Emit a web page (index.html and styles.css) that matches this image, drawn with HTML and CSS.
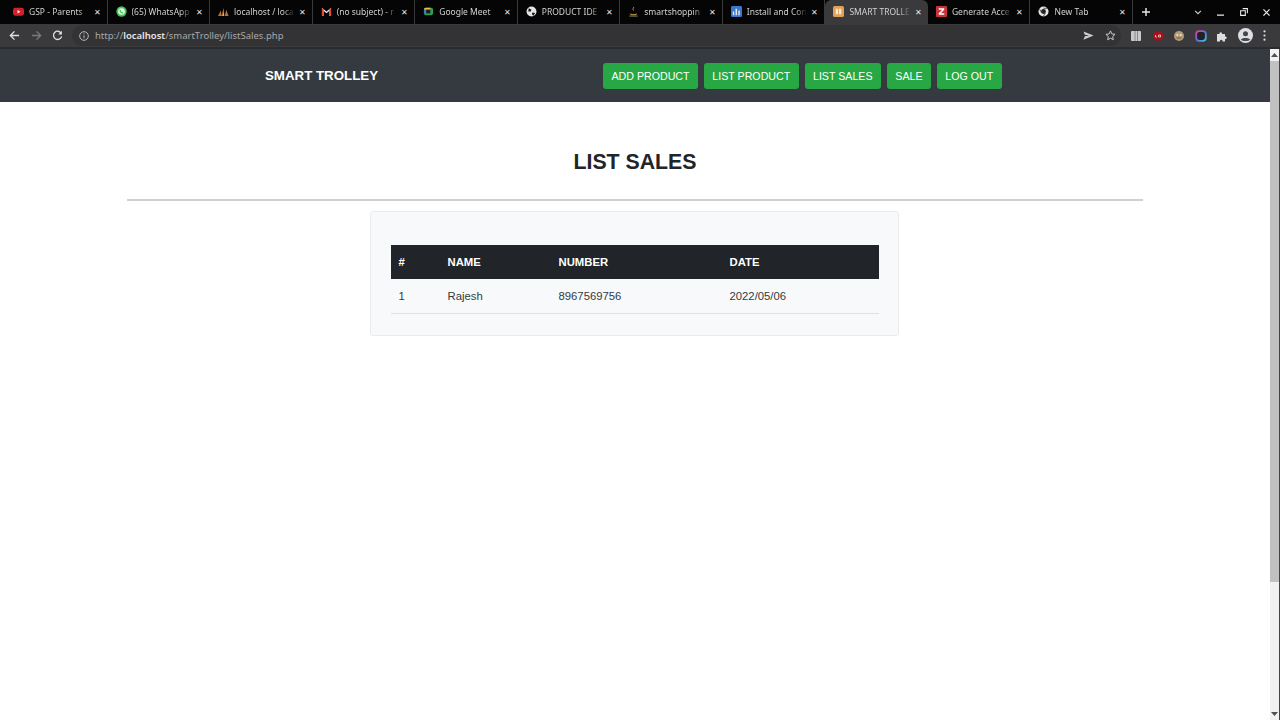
FILE: index.html
```html
<!DOCTYPE html>
<html lang="en">
<head>
  <meta charset="UTF-8">
  <meta name="viewport" content="width=device-width, initial-scale=1.0">
  <title>List Sales</title>
  <link rel="stylesheet" href="styles.css">
</head>
<body>

  <!-- browser chrome -->
  <div class="tab-strip">
    <div class="tab">
      <svg class="fav" viewBox="0 0 12 12"><rect y="2" width="12" height="8.5" rx="2.5" fill="#d5202a"/><path d="M5 4.300v4l3-2z" fill="#fff"/></svg>
      <span class="tab-title">GSP - Parents</span><span class="tab-x">&#10005;</span>
    </div>
    <div class="tab">
      <svg class="fav" viewBox="0 0 12 12"><circle cx="6" cy="6" r="5.600" fill="#3fc552"/><circle cx="6" cy="6" r="3.600" fill="#e8f8ea"/><path d="M4.400 4.200c0 2 1.500 3.400 3.300 3.600" stroke="#3fc552" stroke-width="1.300" fill="none"/></svg>
      <span class="tab-title">(65) WhatsApp</span><span class="tab-x">&#10005;</span>
    </div>
    <div class="tab">
      <svg class="fav" viewBox="0 0 12 12"><path d="M0 11 3 5l1 6zM4 11l2-9 1 9zM7.500 11 9 4l2.500 7z" fill="#b9733a"/><path d="M5 11 6 6l.5 5z" fill="#e2c14a"/></svg>
      <span class="tab-title">localhost / loca</span><span class="tab-x">&#10005;</span>
    </div>
    <div class="tab">
      <svg class="fav" viewBox="0 0 12 12"><path d="M1 10.500V2l5 4 5-4v8.500H9V5.500L6 8 3 5.500v5z" fill="#e6e6e6"/><path d="M1 10.500V2l2 1.600v6.900z" fill="#d8473b"/><path d="M11 10.500V2L9 3.600v6.900z" fill="#d8473b"/></svg>
      <span class="tab-title">(no subject) - r</span><span class="tab-x">&#10005;</span>
    </div>
    <div class="tab">
      <svg class="fav" viewBox="0 0 12 12"><rect x="1" y="2" width="10" height="8" rx="2" fill="#2f9e56"/><path d="M1 4a2 2 0 0 1 2-2h5v2z" fill="#f2bd2c"/><path d="M1 4h2.500v4H1z" fill="#3a78e0"/><rect x="3.500" y="4" width="4.500" height="4" fill="#1c1c1c"/></svg>
      <span class="tab-title">Google Meet</span><span class="tab-x">&#10005;</span>
    </div>
    <div class="tab">
      <svg class="fav" viewBox="0 0 12 12"><circle cx="6" cy="6" r="5.400" fill="#e4e4e4"/><path d="M3 2.500 6 4 5 6 2.500 6zM7 7l3 .5L8 10.500 6.500 9z" fill="#111"/></svg>
      <span class="tab-title">PRODUCT IDE</span><span class="tab-x">&#10005;</span>
    </div>
    <div class="tab">
      <svg class="fav" viewBox="0 0 12 12"><path d="M6.500 1c-1 1.500-1.500 2.500-.5 4" stroke="#c9a13c" fill="none"/><path d="M2 7.500c1 1.500 7 1.500 8 0l-1 2.500H3z" fill="#a98a3d"/><path d="M1.500 11h9" stroke="#8d8d6a"/></svg>
      <span class="tab-title">smartshoppin</span><span class="tab-x">&#10005;</span>
    </div>
    <div class="tab">
      <svg class="fav" viewBox="0 0 12 12"><rect width="12" height="12" rx="1.500" fill="#3c78c9"/><path d="M2 10V6h1.500v4zM5 10V3h1.500v7zM8 10V5h1.500v5z" fill="#e6eefa"/></svg>
      <span class="tab-title">Install and Con</span><span class="tab-x">&#10005;</span>
    </div>
    <div class="tab tab-active">
      <svg class="fav" viewBox="0 0 12 12"><rect width="12" height="12" rx="2" fill="#e2a158"/><path d="M3 3h2.500v6H3zM6.500 3H9v6H6.500z" fill="#fbe8d0"/></svg>
      <span class="tab-title">SMART TROLLE</span><span class="tab-x">&#10005;</span>
    </div>
    <div class="tab">
      <svg class="fav" viewBox="0 0 12 12"><rect width="12" height="12" rx="1" fill="#c8343c"/><path d="M3 2.500h6v1.500L5.200 8H9v1.500H3V8l3.800-4H3z" fill="#fff"/></svg>
      <span class="tab-title">Generate Acce</span><span class="tab-x">&#10005;</span>
    </div>
    <div class="tab">
      <svg class="fav" viewBox="0 0 12 12"><circle cx="6" cy="6" r="5.500" fill="#e6e6e6"/><circle cx="6" cy="6" r="2.600" fill="#222"/><path d="M6 2.500h4.500M4 7.500 1.800 3.500M8 7.500l-2.300 4" stroke="#222" stroke-width=".8"/></svg>
      <span class="tab-title">New Tab</span><span class="tab-x">&#10005;</span>
    </div>
    <div class="new-tab">
      <svg width="8" height="8" viewBox="0 0 10 10"><path d="M5 0v10M0 5h10" stroke="#e8e8e8" stroke-width="1.800"/></svg>
    </div>
    <div class="win-btns">
      <svg width="8" height="5" viewBox="0 0 9 6"><path d="M1 1l3.500 3.500L8 1" stroke="#ccc" stroke-width="1.400" fill="none"/></svg>
      <svg width="7" height="7" viewBox="0 0 8 8"><path d="M0 7h8" stroke="#eee" stroke-width="1.400"/></svg>
      <svg width="8" height="8" viewBox="0 0 9 9"><path d="M3 .7h5.300V6M.7 3h5.300v5.300H.7z" stroke="#eee" stroke-width="1.200" fill="none"/></svg>
      <svg width="7" height="7" viewBox="0 0 8 8"><path d="M.5.500l7 7M7.500.500l-7 7" stroke="#eee" stroke-width="1.400"/></svg>
    </div>
  </div>

  <div class="toolbar">
    <svg class="tool" viewBox="0 0 12 12"><path d="M11 6H2M6 1.500 1.500 6 6 10.500" stroke="#e0e0e0" stroke-width="1.500" fill="none"/></svg>
    <svg class="tool" viewBox="0 0 12 12"><path d="M1 6h9M6 1.500 10.500 6 6 10.500" stroke="#7b7b7b" stroke-width="1.500" fill="none"/></svg>
    <svg class="tool tool-reload" viewBox="0 0 12 12"><path d="M10 3.500A4.500 4.500 0 1 0 10.500 7" stroke="#e0e0e0" stroke-width="1.400" fill="none"/><path d="M10.800.800v4h-4z" fill="#e0e0e0"/></svg>
    <div class="omnibox">
      <svg class="info" viewBox="0 0 10 10"><circle cx="5" cy="5" r="4.300" stroke="#bbb" fill="none"/><path d="M5 4.300v3M5 2.300v1" stroke="#bbb"/></svg>
      <span class="url">http://<b>localhost</b>/smartTrolley/listSales.php</span>
      <svg class="omni-end" viewBox="0 0 12 12"><path d="M.5 1.500 11.500 6 .5 10.500 2 6.700 7 6 2 5.300z" fill="#cfcfcf"/></svg>
      <svg class="omni-end" viewBox="0 0 12 12"><path d="M6 1l1.500 3.300 3.500.4-2.600 2.400.7 3.500L6 8.900l-3.100 1.700.7-3.500L1 4.700l3.500-.4z" stroke="#d5d5d5" fill="none"/></svg>
    </div>
    <div class="ext-icons">
      <svg class="ext" viewBox="0 0 12 12"><rect x="1" y="1" width="10" height="10" rx="1" fill="#c9c9c9"/><path d="M5 1v10M7.500 1v10" stroke="#888"/></svg>
      <svg class="ext" viewBox="0 0 12 12"><path d="M3.500 1.500h5l2.500 2.500v4L8.500 10.500h-5L1 8V4z" fill="#a5121c"/><path d="M3.500 5v2h1.500M6.500 5v2h2V5z" stroke="#f3d5d5" stroke-width=".8" fill="none"/></svg>
      <svg class="ext" viewBox="0 0 12 12"><circle cx="6" cy="6" r="5" fill="#b49a78"/><circle cx="4.300" cy="5" r="1" fill="#f0e4d0"/><circle cx="7.700" cy="5" r="1" fill="#f0e4d0"/><path d="M3.500 8h5" stroke="#6d5a42"/></svg>
      <svg class="ext" viewBox="0 0 12 12"><defs><linearGradient id="ring" x1="0" y1="0" x2="1" y2="1"><stop offset="0" stop-color="#e6409a"/><stop offset=".5" stop-color="#5d6ee8"/><stop offset="1" stop-color="#38c7d8"/></linearGradient></defs><rect x="1.200" y="1.200" width="9.600" height="9.600" rx="3" stroke="url(#ring)" stroke-width="1.800" fill="#222"/></svg>
      <svg class="ext" viewBox="0 0 12 12"><path d="M1 4h2.500a1.300 1.300 0 1 1 2.500 0h3v2.500a1.300 1.300 0 1 1 0 2.500V11.500H6.500a1.300 1.300 0 1 0-2.500 0H1z" fill="#dedede"/></svg>
      <svg class="avatar" viewBox="0 0 15 15"><circle cx="7.500" cy="7.500" r="7.500" fill="#dcdfe3"/><circle cx="7.500" cy="5.700" r="2.500" fill="#44474c"/><path d="M2.800 11.800c1-2.300 8.400-2.300 9.400 0-1.500 1.700-7.900 1.700-9.400 0z" fill="#44474c"/></svg>
      <svg class="dots" viewBox="0 0 3 11"><circle cx="1.500" cy="1.300" r="1.100" fill="#ddd"/><circle cx="1.500" cy="5.500" r="1.100" fill="#ddd"/><circle cx="1.500" cy="9.700" r="1.100" fill="#ddd"/></svg>
    </div>
  </div>

  <div class="viewport">
    <div class="page">
      <nav class="navbar">
        <a class="brand">SMART TROLLEY</a>
        <div class="nav-btns">
          <a class="btn">ADD PRODUCT</a>
          <a class="btn">LIST PRODUCT</a>
          <a class="btn">LIST SALES</a>
          <a class="btn">SALE</a>
          <a class="btn">LOG OUT</a>
        </div>
      </nav>

      <div class="container">
        <h2 class="page-title">LIST SALES</h2>
        <hr class="rule">
        <div class="card">
          <table class="sales">
            <thead>
              <tr><th class="col-id">#</th><th class="col-name">NAME</th><th class="col-num">NUMBER</th><th>DATE</th></tr>
            </thead>
            <tbody>
              <tr><td>1</td><td>Rajesh</td><td>8967569756</td><td>2022/05/06</td></tr>
            </tbody>
          </table>
        </div>
      </div>
    </div>

    <div class="scrollbar">
      <svg class="arrow" viewBox="0 0 7 4"><path d="M3.500 0 7 4H0z" fill="#505050"/></svg>
      <div class="thumb"></div>
      <svg class="arrow" viewBox="0 0 7 4"><path d="M0 0h7L3.500 4z" fill="#505050"/></svg>
    </div>
  </div>

</body>
</html>
```

FILE: styles.css
```css
* {
  margin: 0;
  padding: 0;
  box-sizing: border-box;
}
html, body {
  height: 100%;
  overflow: hidden;
}
body {
  font-family: "Liberation Sans", Arial, sans-serif;
  background-color: white;
  color: #212529;
  display: flex;
  flex-direction: column;
}

/* browser chrome */
.tab-strip {
  height: 24px;
  flex: none;
  display: flex;
  align-items: stretch;
  padding-left: 5px;
  background-color: #050505;
  color: #d2d2d2;
  font-family: "Noto Sans", sans-serif;
  font-size: 8.5px;
}
.tab {
  width: 102.55px;
  flex: none;
  display: flex;
  align-items: center;
  padding: 0 6px 1px 8px;
  border-right: 1px solid #3a3a3a;
}
.tab-active {
  background-color: #3a3a3c;
  border-right: none;
  border-radius: 6px 6px 0 0;
}
.fav {
  width: 11px;
  height: 11px;
  flex: none;
  margin-right: 5px;
}
.tab-title {
  flex: 1;
  white-space: nowrap;
  -webkit-mask-image: linear-gradient(to left, transparent 0, black 12px);
  mask-image: linear-gradient(to left, transparent 0, black 12px);
}
.tab-x {
  flex: none;
  margin-left: 4px;
  font-size: 8px;
  color: #e4e4e4;
}
.new-tab {
  width: 26px;
  display: flex;
  align-items: center;
  justify-content: center;
}
.win-btns {
  flex: 1;
  display: flex;
  align-items: center;
  justify-content: space-between;
  padding: 0 10px 0 35px;
}
.toolbar {
  height: 23px;
  flex: none;
  display: flex;
  align-items: center;
  padding-left: 9px;
  background-color: #3a3a3c;
  gap: 11px;
}
.tool {
  width: 11px;
  height: 11px;
  flex: none;
}
.tool-reload {
  margin-left: -1px;
}
.omnibox {
  width: 1049px;
  height: 21px;
  margin-left: -2px;
  border-radius: 11px;
  display: flex;
  align-items: center;
  padding: 0 5px 0 7px;
  background-color: #333335;
  gap: 11px;
}
.info {
  width: 10px;
  height: 10px;
  flex: none;
  margin-right: -5px;
}
.url {
  flex: 1;
  font-family: "Noto Sans", sans-serif;
  font-size: 9.5px;
  color: #a8a8a8;
}
.url b {
  font-weight: 600;
  color: #e6e6e6;
}
.omni-end {
  width: 11px;
  height: 11px;
  flex: none;
}
.ext-icons {
  flex: 1;
  display: flex;
  align-items: center;
  gap: 9.5px;
  margin-left: -2px;
}
.ext {
  width: 12px;
  height: 12px;
  flex: none;
}
.avatar {
  width: 15px;
  height: 15px;
  flex: none;
}
.dots {
  width: 3px;
  height: 11px;
  flex: none;
  margin-left: 1px;
}

/* page */
.viewport {
  flex: 1;
  min-height: 0;
  display: flex;
  border-top: 2px solid #2a2c2f;
}
.page {
  flex: 1;
  min-width: 0;
}
.navbar {
  height: 53px;
  display: flex;
  align-items: center;
  background-color: #343a40;
  padding-left: 265px;
}
.brand {
  width: 338px;
  font-size: 13.3px;
  font-weight: bold;
  color: white;
}
.nav-btns {
  display: flex;
  gap: 5.8px;
}
.btn {
  height: 26px;
  padding: 0 8.5px;
  display: flex;
  align-items: center;
  font-size: 10.65px;
  color: white;
  background-color: #28a745;
  border-radius: 3px;
}
.container {
  width: 80%;
  margin: 0 auto;
  display: flex;
  flex-direction: column;
  align-items: center;
}
.page-title {
  margin-top: 48px;
  font-size: 21.3px;
  line-height: 24px;
  font-weight: bold;
}
.rule {
  width: 100%;
  height: 2px;
  margin-top: 25px;
  border: none;
  background-color: #cfd0d2;
}
.card {
  width: 529px;
  height: 125px;
  margin: 10px 2px 0 0;
  padding: 33px 19px 0 20px;
  background-color: #f8f9fa;
  border: 1px solid #e9ecef;
  border-radius: 3px;
}
.sales {
  width: 100%;
  border-collapse: collapse;
  font-size: 11.3px;
}
.sales th {
  height: 34px;
  padding: 0 8px;
  text-align: left;
  color: white;
  background-color: #212529;
}
.sales td {
  height: 34px;
  padding: 0 8px;
  color: #343a40;
  border-bottom: 1px solid #dee2e6;
}
.col-id {
  width: 49px;
}
.col-name {
  width: 111px;
}
.col-num {
  width: 171px;
}
.scrollbar {
  width: 10px;
  flex: none;
  display: flex;
  flex-direction: column;
  align-items: center;
  background-color: #f1f1f1;
  border-right: 1px solid #444;
}
.arrow {
  width: 7px;
  height: 4px;
  margin: 4px 0;
  flex: none;
}
.thumb {
  width: 100%;
  height: 521px;
  flex: none;
  background-color: #c1c1c1;
}
.thumb + .arrow {
  margin-top: auto;
}
```
